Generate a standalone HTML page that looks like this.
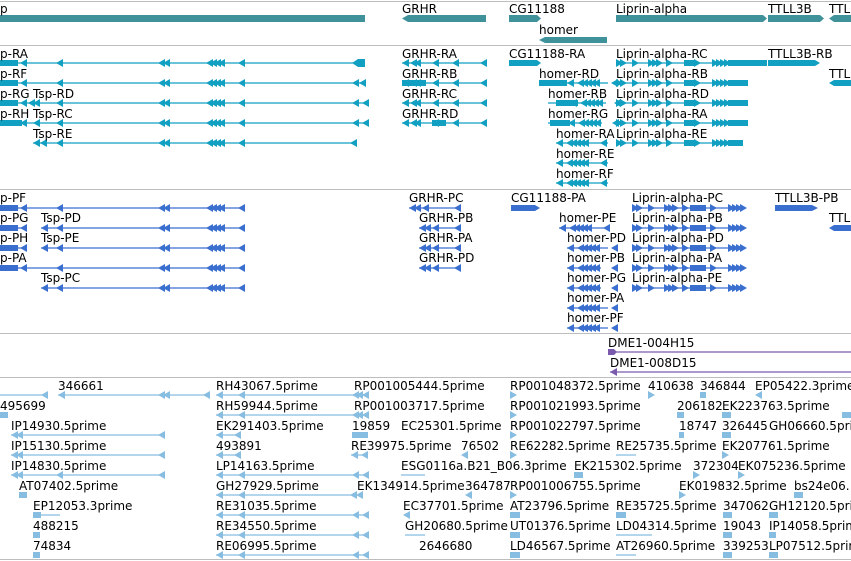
<!DOCTYPE html>
<html><head><meta charset="utf-8"><style>
html,body{margin:0;padding:0;background:#fff;overflow:hidden}
svg{display:block}
text{font-family:"DejaVu Sans","Liberation Sans",sans-serif;font-size:12px;fill:#000}
</style></head><body>
<svg width="851" height="561" viewBox="0 0 851 561" xmlns="http://www.w3.org/2000/svg" xmlns:xlink="http://www.w3.org/1999/xlink">
<defs>
<polygon id="L" points="0,0 7,-4 7,4"/>
<polygon id="R" points="7,0 0,-4 0,4"/>
<g id="TspB"><use href="#L" x="56" y="0"/><use href="#L" x="158" y="0"/><use href="#L" x="163" y="0"/><use href="#L" x="206" y="0"/><use href="#L" x="210" y="0"/><use href="#L" x="214" y="0"/><use href="#L" x="218" y="0"/><use href="#L" x="238" y="0"/></g>
<g id="TspR"><use href="#L" x="20" y="0"/><use href="#TspB"/></g>
<g id="GRe"><use href="#L" x="402" y="0"/><use href="#L" x="410" y="0"/><use href="#L" x="414" y="0"/><use href="#L" x="432" y="0"/><use href="#L" x="452" y="0"/><use href="#L" x="480" y="0"/></g>
<g id="Lip"><use href="#R" x="616" y="0"/><use href="#R" x="620" y="0"/><use href="#R" x="632" y="0"/><use href="#R" x="648" y="0"/><use href="#R" x="652" y="0"/><use href="#R" x="656" y="0"/><use href="#R" x="666" y="0"/><use href="#R" x="694" y="0"/><use href="#R" x="712" y="0"/><use href="#R" x="716" y="0"/><use href="#R" x="720" y="0"/><use href="#R" x="724" y="0"/></g>
<g id="Hom"><use href="#L" x="0" y="0"/><use href="#L" x="10" y="0"/><use href="#L" x="14" y="0"/><use href="#L" x="18" y="0"/><use href="#L" x="22" y="0"/><use href="#L" x="26" y="0"/><use href="#L" x="44" y="0"/></g>
</defs>
<g stroke="#bdbdbd" stroke-width="1">
<line x1="0" y1="1.5" x2="851" y2="1.5"/><line x1="0" y1="45.5" x2="851" y2="45.5"/>
<line x1="0" y1="189.5" x2="851" y2="189.5"/><line x1="0" y1="333.5" x2="851" y2="333.5"/>
<line x1="0" y1="377.5" x2="851" y2="377.5"/><line x1="0" y1="559.5" x2="851" y2="559.5"/>
</g>
<g fill="#40929a">
<rect x="0" y="15" width="365" height="7"/><polygon points="402,18.5 408,15 486,15 486,22 408,22"/>
<polygon points="509,15 537,15 541,18.5 537,22 509,22"/><polygon points="539,40 545,37 607,37 607,43 545,43"/>
<polygon points="616,15 763,15 767,18.5 763,22 616,22"/><polygon points="768,15 820,15 824,18.5 820,22 768,22"/>
<polygon points="829,18.5 834,15 851,15 851,22 834,22"/>
</g>
<text x="0" y="13">p</text><text x="402" y="13">GRHR</text><text x="509" y="13">CG11188</text><text x="539" y="34">homer</text>
<text x="616" y="13">Liprin-alpha</text><text x="768" y="13">TTLL3B</text><text x="829" y="13">TTLL</text>
<!-- transcripts -->
<g stroke="#11a0c2" stroke-width="1.3">
<line x1="0" y1="63" x2="365" y2="63"/><line x1="402" y1="63" x2="487" y2="63"/><line x1="616" y1="63" x2="767" y2="63"/>
<line x1="0" y1="83" x2="366" y2="83"/><line x1="402" y1="83" x2="487" y2="83"/><line x1="539" y1="83" x2="608" y2="83"/><line x1="616" y1="83" x2="748" y2="83"/>
<line x1="0" y1="103" x2="368" y2="103"/><line x1="402" y1="103" x2="487" y2="103"/><line x1="548" y1="103" x2="606" y2="103"/><line x1="616" y1="103" x2="748" y2="103"/>
<line x1="0" y1="123" x2="368" y2="123"/><line x1="402" y1="123" x2="487" y2="123"/><line x1="548" y1="123" x2="602" y2="123"/><line x1="616" y1="123" x2="748" y2="123"/>
<line x1="33" y1="143" x2="357" y2="143"/><line x1="556" y1="143" x2="608" y2="143"/><line x1="616" y1="143" x2="743" y2="143"/>
<line x1="556" y1="163" x2="608" y2="163"/><line x1="556" y1="183" x2="608" y2="183"/>
</g>
<g fill="#11a0c2">
<rect x="0" y="60" width="18" height="6"/><polygon points="352,63 358,59 365,59 365,67 358,67"/><rect x="0" y="80" width="18" height="6"/><rect x="0" y="100" width="18" height="6"/><rect x="0" y="120" width="22" height="6"/>
<use href="#TspR" y="63"/><use href="#TspR" y="83"/><use href="#TspR" y="103"/><use href="#TspR" y="123"/><use href="#TspB" y="143"/>
<use href="#L" x="352" y="83"/><use href="#L" x="359" y="83"/><use href="#L" x="352" y="103"/><use href="#L" x="362" y="103"/><use href="#L" x="352" y="123"/><use href="#L" x="362" y="123"/><use href="#L" x="350" y="143"/>
<use href="#L" x="28" y="103"/><use href="#L" x="33" y="103"/><use href="#L" x="33" y="123"/><use href="#L" x="33" y="143"/><use href="#L" x="40" y="143"/>
<use href="#GRe" y="63"/><use href="#GRe" y="83"/><use href="#GRe" y="103"/><use href="#GRe" y="123"/>
<rect x="402" y="80" width="24" height="6"/><rect x="432" y="120" width="14" height="6"/>
<polygon points="509,60 537,60 541,63 537,66 509,66"/><polygon points="768,60 815,60 820,63 815,66 768,66"/><polygon points="829,83 834,80 851,80 851,86 834,86"/>
<rect x="539" y="80" width="28" height="6"/><use href="#Hom" x="567" y="83"/>
<rect x="556" y="100" width="22" height="6"/><use href="#Hom" x="570" y="103"/>
<rect x="550" y="120" width="20" height="6"/><use href="#Hom" x="568" y="123"/>
<use href="#Hom" x="556" y="143"/><use href="#Hom" x="556" y="163"/><use href="#Hom" x="556" y="183"/>
<use href="#Lip" y="63"/><use href="#Lip" y="83"/><use href="#Lip" y="103"/><use href="#Lip" y="123"/><use href="#Lip" y="143"/>
<rect x="684" y="60" width="10" height="6"/><rect x="728" y="60" width="39" height="6"/><rect x="684" y="80" width="10" height="6"/><rect x="728" y="80" width="20" height="6"/><rect x="684" y="100" width="10" height="6"/><rect x="728" y="100" width="20" height="6"/><rect x="684" y="120" width="10" height="6"/><rect x="728" y="120" width="20" height="6"/><rect x="684" y="140" width="10" height="6"/><rect x="728" y="140" width="15" height="6"/>
</g>
<text x="0" y="58">p-RA</text><text x="0" y="78">p-RF</text><text x="0" y="98">p-RG</text><text x="33" y="98">Tsp-RD</text><text x="0" y="118">p-RH</text><text x="33" y="118">Tsp-RC</text><text x="33" y="138">Tsp-RE</text>
<text x="402" y="58">GRHR-RA</text><text x="402" y="78">GRHR-RB</text><text x="402" y="98">GRHR-RC</text><text x="402" y="118">GRHR-RD</text>
<text x="509" y="58">CG11188-RA</text><text x="539" y="78">homer-RD</text><text x="548" y="98">homer-RB</text><text x="548" y="118">homer-RG</text><text x="556" y="138">homer-RA</text><text x="556" y="158">homer-RE</text><text x="556" y="178">homer-RF</text>
<text x="616" y="58">Liprin-alpha-RC</text><text x="616" y="78">Liprin-alpha-RB</text><text x="616" y="98">Liprin-alpha-RD</text><text x="616" y="118">Liprin-alpha-RA</text><text x="616" y="138">Liprin-alpha-RE</text>
<text x="768" y="58">TTLL3B-RB</text><text x="829" y="78">TTLL</text>
<!-- proteins -->
<g stroke="#3a6fcf" stroke-width="1.3">
<line x1="0" y1="208" x2="244" y2="208"/><line x1="409" y1="208" x2="461" y2="208"/><line x1="632" y1="208" x2="735" y2="208"/>
<line x1="0" y1="228" x2="24" y2="228"/><line x1="41" y1="228" x2="244" y2="228"/><line x1="419" y1="228" x2="461" y2="228"/><line x1="559" y1="228" x2="608" y2="228"/><line x1="632" y1="228" x2="735" y2="228"/>
<line x1="0" y1="248" x2="24" y2="248"/><line x1="41" y1="248" x2="244" y2="248"/><line x1="419" y1="248" x2="461" y2="248"/><line x1="567" y1="248" x2="608" y2="248"/><line x1="632" y1="248" x2="735" y2="248"/>
<line x1="0" y1="268" x2="244" y2="268"/><line x1="419" y1="268" x2="461" y2="268"/><line x1="567" y1="268" x2="601" y2="268"/><line x1="632" y1="268" x2="735" y2="268"/>
<line x1="41" y1="288" x2="244" y2="288"/><line x1="567" y1="288" x2="601" y2="288"/><line x1="632" y1="288" x2="735" y2="288"/>
<line x1="567" y1="308" x2="608" y2="308"/><line x1="567" y1="328" x2="608" y2="328"/>
</g>
<g fill="#3a6fcf">
<rect x="0" y="205" width="18" height="6"/><rect x="0" y="225" width="18" height="6"/><rect x="0" y="245" width="18" height="6"/><rect x="0" y="265" width="18" height="6"/>
<use href="#TspR" x="0" y="208"/><use href="#TspR" y="228"/><use href="#TspR" y="248"/><use href="#TspR" y="268"/><use href="#TspB" y="288"/>
<use href="#L" x="41" y="228"/><use href="#L" x="41" y="248"/><use href="#L" x="41" y="288"/>
<polygon points="511,205 535,205 540,208 535,211 511,211"/><polygon points="775,205 812,205 818,208 812,211 775,211"/><polygon points="829,228 834,225 851,225 851,231 834,231"/>
<use href="#L" x="409" y="208"/><use href="#L" x="414" y="208"/><use href="#L" x="422" y="208"/><use href="#L" x="454" y="208"/>
<use href="#L" x="419" y="228"/><use href="#L" x="424" y="228"/><use href="#L" x="432" y="228"/><use href="#L" x="454" y="228"/>
<use href="#L" x="419" y="248"/><use href="#L" x="424" y="248"/><use href="#L" x="432" y="248"/><use href="#L" x="454" y="248"/>
<use href="#L" x="419" y="268"/><use href="#L" x="424" y="268"/><use href="#L" x="432" y="268"/><use href="#L" x="454" y="268"/>
<use href="#Hom" x="559" y="228"/><use href="#Hom" x="567" y="248"/><use href="#Hom" x="567" y="268"/><use href="#Hom" x="567" y="288"/><use href="#Hom" x="567" y="308"/><use href="#Hom" x="567" y="328"/>
<use href="#Lip" x="16" y="208"/><use href="#Lip" x="16" y="228"/><use href="#Lip" x="16" y="248"/><use href="#Lip" x="16" y="268"/><use href="#Lip" x="16" y="288"/>
<rect x="690" y="205" width="16" height="6"/><rect x="690" y="225" width="16" height="6"/><rect x="690" y="245" width="16" height="6"/><rect x="690" y="265" width="16" height="6"/><rect x="690" y="285" width="16" height="6"/>
</g>
<text x="0" y="202">p-PF</text><text x="0" y="222">p-PG</text><text x="41" y="222">Tsp-PD</text><text x="0" y="242">p-PH</text><text x="41" y="242">Tsp-PE</text><text x="0" y="262">p-PA</text><text x="41" y="282">Tsp-PC</text>
<text x="409" y="202">GRHR-PC</text><text x="419" y="222">GRHR-PB</text><text x="419" y="242">GRHR-PA</text><text x="419" y="262">GRHR-PD</text>
<text x="511" y="202">CG11188-PA</text><text x="559" y="222">homer-PE</text><text x="567" y="242">homer-PD</text><text x="567" y="262">homer-PB</text><text x="567" y="282">homer-PG</text><text x="567" y="302">homer-PA</text><text x="567" y="322">homer-PF</text>
<text x="632" y="202">Liprin-alpha-PC</text><text x="632" y="222">Liprin-alpha-PB</text><text x="632" y="242">Liprin-alpha-PD</text><text x="632" y="262">Liprin-alpha-PA</text><text x="632" y="282">Liprin-alpha-PE</text>
<text x="775" y="202">TTLL3B-PB</text><text x="829" y="222">TTLL</text>
<!-- clones -->
<g stroke="#7a5aad" stroke-width="1.3"><line x1="608" y1="352" x2="851" y2="352"/><line x1="610" y1="372" x2="851" y2="372"/></g>
<g fill="#7a5aad"><polygon points="608,349 614,349 617,352 614,355 608,355"/><polygon points="610,372 617,368 617,376"/></g>
<text x="608" y="347">DME1-004H15</text><text x="610" y="367">DME1-008D15</text>
<!-- ESTs -->
<g stroke="#86bde0" stroke-width="1.3">
<line x1="0" y1="395" x2="48" y2="395"/><line x1="58" y1="395" x2="210" y2="395"/><line x1="216" y1="395" x2="368" y2="395"/>
<line x1="216" y1="415" x2="368" y2="415"/>
<line x1="11" y1="435" x2="163" y2="435"/><line x1="216" y1="435" x2="241" y2="435"/>
<line x1="11" y1="455" x2="163" y2="455"/><line x1="216" y1="455" x2="241" y2="455"/><line x1="351" y1="455" x2="368" y2="455"/><line x1="616" y1="455" x2="636" y2="455"/>
<line x1="11" y1="475" x2="163" y2="475"/><line x1="216" y1="475" x2="368" y2="475"/><line x1="401" y1="475" x2="425" y2="475"/>
<line x1="216" y1="495" x2="357" y2="495"/>
<line x1="33" y1="515" x2="60" y2="515"/><line x1="216" y1="515" x2="368" y2="515"/>
<line x1="216" y1="535" x2="368" y2="535"/><line x1="405" y1="535" x2="425" y2="535"/><line x1="616" y1="535" x2="652" y2="535"/>
<line x1="216" y1="555" x2="368" y2="555"/><line x1="616" y1="555" x2="636" y2="555"/>
</g>
<g fill="#86bde0">
<use href="#L" x="41" y="395"/><use href="#L" x="58" y="395"/><use href="#L" x="158" y="395"/><use href="#L" x="163" y="395"/><use href="#L" x="203" y="395"/><use href="#L" x="216" y="395"/><use href="#L" x="238" y="395"/><use href="#L" x="352" y="395"/><use href="#L" x="356" y="395"/><use href="#L" x="362" y="395"/>
<use href="#L" x="216" y="415"/><use href="#L" x="238" y="415"/><use href="#L" x="352" y="415"/><use href="#L" x="356" y="415"/><use href="#L" x="362" y="415"/>
<use href="#L" x="11" y="435"/><use href="#L" x="16" y="435"/><use href="#L" x="158" y="435"/><use href="#L" x="216" y="435"/><use href="#L" x="234" y="435"/>
<use href="#L" x="11" y="455"/><use href="#L" x="16" y="455"/><use href="#L" x="158" y="455"/><use href="#L" x="216" y="455"/><use href="#L" x="234" y="455"/><use href="#L" x="351" y="455"/><use href="#L" x="361" y="455"/>
<use href="#L" x="11" y="475"/><use href="#L" x="16" y="475"/><use href="#L" x="56" y="475"/><use href="#L" x="158" y="475"/><use href="#L" x="216" y="475"/><use href="#L" x="238" y="475"/><use href="#L" x="352" y="475"/><use href="#L" x="362" y="475"/>
<use href="#L" x="216" y="495"/><use href="#L" x="238" y="495"/><use href="#L" x="350" y="495"/><use href="#L" x="356" y="495"/>
<use href="#L" x="216" y="515"/><use href="#L" x="238" y="515"/><use href="#L" x="352" y="515"/><use href="#L" x="362" y="515"/>
<use href="#L" x="216" y="535"/><use href="#L" x="238" y="535"/><use href="#L" x="352" y="535"/><use href="#L" x="362" y="535"/>
<use href="#L" x="216" y="555"/><use href="#L" x="238" y="555"/><use href="#L" x="352" y="555"/><use href="#L" x="362" y="555"/>
<rect x="0" y="412" width="8" height="6"/><rect x="19" y="492" width="8" height="6"/><rect x="33" y="512" width="8" height="6"/><rect x="33" y="532" width="7" height="6"/><rect x="33" y="552" width="7" height="6"/>
<rect x="352" y="432" width="16" height="6"/><use href="#R" x="510" y="395"/><use href="#R" x="510" y="415"/><use href="#R" x="510" y="435"/><use href="#R" x="510" y="455"/><use href="#R" x="510" y="495"/>
<rect x="510" y="512" width="10" height="6"/><rect x="510" y="532" width="10" height="6"/><rect x="510" y="552" width="10" height="6"/>
<use href="#R" x="648" y="395"/><rect x="700" y="392" width="6" height="6"/><rect x="677" y="412" width="7" height="6"/><rect x="722" y="412" width="9" height="6"/><rect x="679" y="432" width="5" height="6"/><rect x="722" y="432" width="9" height="6"/>
<use href="#R" x="722" y="455"/><use href="#R" x="693" y="475"/><use href="#R" x="738" y="475"/><use href="#R" x="679" y="495"/><rect x="794" y="492" width="9" height="6"/>
<rect x="616" y="512" width="10" height="6"/><rect x="723" y="512" width="9" height="6"/><rect x="769" y="512" width="9" height="6"/><rect x="723" y="532" width="9" height="6"/><rect x="769" y="532" width="7" height="6"/><rect x="723" y="552" width="9" height="6"/><rect x="769" y="552" width="9" height="6"/>
<use href="#L" x="461" y="455"/><rect x="574" y="472" width="9" height="6"/><use href="#L" x="465" y="495"/><use href="#L" x="403" y="515"/><use href="#L" x="755" y="395"/><rect x="842" y="412" width="9" height="6"/>
</g>
<text x="58" y="390">346661</text><text x="216" y="390">RH43067.5prime</text><text x="354" y="390">RP001005444.5prime</text><text x="510" y="390">RP001048372.5prime</text><text x="648" y="390">410638</text><text x="700" y="390">346844</text><text x="755" y="390">EP05422.3prime</text>
<text x="0" y="410">495699</text><text x="216" y="410">RH59944.5prime</text><text x="354" y="410">RP001003717.5prime</text><text x="510" y="410">RP001021993.5prime</text><text x="677" y="410">206182</text><text x="722" y="410">EK223763.5prime</text>
<text x="11" y="430">IP14930.5prime</text><text x="216" y="430">EK291403.5prime</text><text x="352" y="430">19859</text><text x="401" y="430">EC25301.5prime</text><text x="510" y="430">RP001022797.5prime</text><text x="679" y="430">18747</text><text x="722" y="430">326445</text><text x="769" y="430">GH06660.5prime</text>
<text x="11" y="450">IP15130.5prime</text><text x="216" y="450">493891</text><text x="351" y="450">RE39975.5prime</text><text x="461" y="450">76502</text><text x="510" y="450">RE62282.5prime</text><text x="616" y="450">RE25735.5prime</text><text x="722" y="450">EK207761.5prime</text>
<text x="11" y="470">IP14830.5prime</text><text x="216" y="470">LP14163.5prime</text><text x="401" y="470">ESG0116a.B21_B06.3prime</text><text x="574" y="470">EK215302.5prime</text><text x="693" y="470">372304</text><text x="738" y="470">EK075236.5prime</text>
<text x="19" y="490">AT07402.5prime</text><text x="216" y="490">GH27929.5prime</text><text x="357" y="490">EK134914.5prime</text><text x="465" y="490">364787</text><text x="510" y="490">RP001006755.5prime</text><text x="679" y="490">EK019832.5prime</text><text x="794" y="490">bs24e06.</text>
<text x="33" y="510">EP12053.3prime</text><text x="216" y="510">RE31035.5prime</text><text x="403" y="510">EC37701.5prime</text><text x="510" y="510">AT23796.5prime</text><text x="616" y="510">RE35725.5prime</text><text x="723" y="510">347062</text><text x="769" y="510">GH12120.5prime</text>
<text x="33" y="530">488215</text><text x="216" y="530">RE34550.5prime</text><text x="405" y="530">GH20680.5prime</text><text x="510" y="530">UT01376.5prime</text><text x="616" y="530">LD04314.5prime</text><text x="723" y="530">19043</text><text x="769" y="530">IP14058.5prime</text>
<text x="33" y="550">74834</text><text x="216" y="550">RE06995.5prime</text><text x="419" y="550">2646680</text><text x="510" y="550">LD46567.5prime</text><text x="616" y="550">AT26960.5prime</text><text x="723" y="550">339253</text><text x="769" y="550">LP07512.5prime</text>
</svg>
</body></html>
